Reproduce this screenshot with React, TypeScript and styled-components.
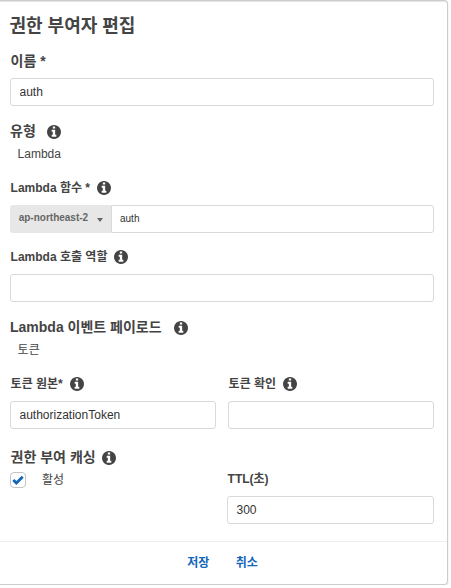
import React, { useState } from 'react';
import styled, { createGlobalStyle } from 'styled-components';

const GlobalStyle = createGlobalStyle`
  * { box-sizing: border-box; }
  body {
    margin: 0;
    background: #fff;
    color: #444;
    font-family: 'Liberation Sans', 'Noto Sans CJK KR', sans-serif;
    font-size: 12px;
    overflow: hidden;
  }
`;

const Card = styled.form`
  width: 448px;
  height: 585px;
  border: 1px solid #ccc;
  border-left: 0;
  border-radius: 0 4px 4px 0;
  box-shadow: 0 1px 2px rgba(0, 0, 0, 0.14), inset 0 1px 0 #e6e6e6;
  display: flex;
  flex-direction: column;
`;

const Body = styled.div`
  height: 540px;
  padding: 12px 13px 0 10px;
`;

const Title = styled.h1`
  margin: 0 0 12px -0.5px;
  font-size: 18px;
  line-height: 26px;
  height: 26px;
  font-weight: 700;
`;

const Section = styled.section<{ $gap: number }>`
  margin-bottom: ${(p) => p.$gap}px;
`;

const InfoSvg = styled.svg`
  flex: none;
  display: block;
`;

const Label = styled.label<{ $gap?: number; $indent?: number }>`
  display: flex;
  align-items: center;
  gap: ${(p) => p.$gap ?? 7}px;
  height: 20px;
  padding-left: ${(p) => p.$indent ?? 0.6}px;
  line-height: 20px;
  font-weight: 700;
  white-space: nowrap;
`;

const Heading = styled(Label)`
  font-size: 14px;

  ${InfoSvg} {
    margin-top: 2px;
  }
`;

const Value = styled.div`
  height: 19px;
  margin-top: 3px;
  padding-top: 1px;
  padding-left: 7.6px;
  line-height: 19px;
`;

const Input = styled.input`
  display: block;
  width: 100%;
  height: 28px;
  margin-top: 7px;
  padding: 0 8.5px;
  border: 1px solid #d9d9d9;
  border-radius: 3px;
  background: #fff;
  color: #333;
  font: inherit;
  outline: none;
`;

const Group = styled.div`
  display: flex;
  margin-top: 7px;
`;

const Region = styled.button`
  display: flex;
  justify-content: space-between;
  width: 101px;
  height: 28px;
  padding: 0 8px 3px 8.7px;
  align-items: center;
  border: 0;
  border-radius: 3px 0 0 3px;
  background: #e7e7e7;
  color: #666;
  font: inherit;
  font-size: 10px;
  font-weight: 700;
`;

const Caret = styled.span`
  margin-top: 4px;
  border: solid transparent;
  border-width: 4px 3.5px 0;
  border-top-color: #666;
`;

const FunctionInput = styled(Input)`
  flex: 1;
  width: auto;
  margin: 0;
  padding: 0 8px 1px;
  border-radius: 0 3px 3px 0;
  font-size: 10px;
`;

const Columns = styled.div`
  display: grid;
  grid-template-columns: 206px 206px;
  column-gap: 12px;
`;

const CacheColumns = styled.div`
  display: grid;
  grid-template-columns: 217px 207px;
  margin-top: 2px;
`;

const CheckRow = styled.div`
  display: flex;
  height: 22px;
  gap: 16px;
  line-height: 22px;
`;

const Checkbox = styled.button`
  display: flex;
  align-items: center;
  justify-content: center;
  width: 16px;
  height: 16px;
  margin-top: 3px;
  padding: 0;
  border: 1px solid #c4c4c4;
  border-radius: 4px;
  background: #fff;
`;

const Footer = styled.footer`
  display: flex;
  justify-content: center;
  gap: 26.5px;
  height: 43px;
  padding: 11px 2px 0 0;
  border-top: 1px solid #eee;
`;

const Action = styled.button`
  height: 20px;
  padding: 0;
  border: 0;
  background: none;
  color: #1166bb;
  font: inherit;
  font-weight: 700;
  line-height: 20px;
`;

const Info = () => (
  <InfoSvg width="14" height="14" viewBox="0 0 1536 1536" fill="#444" aria-hidden="true">
    <path d="M1024 1248v-160q0-14-9-23t-23-9h-96V544q0-14-9-23t-23-9H544q-14 0-23 9t-9 23v160q0 14 9 23t23 9h96v320h-96q-14 0-23 9t-9 23v160q0 14 9 23t23 9h448q14 0 23-9t9-23zM896 352V192q0-14-9-23t-23-9H672q-14 0-23 9t-9 23v160q0 14 9 23t23 9h192q14 0 23-9t9-23zm640 416q0 209-103 385.500T1153.500 1433 768 1536t-385.500-103T103 1153.500 0 768t103-385.500T382.500 103 768 0t385.500 103T1433 382.500 1536 768z" />
  </InfoSvg>
);

const Check = () => (
  <svg width="12" height="10" viewBox="0 0 12 10" fill="none" stroke="#1166bb" strokeWidth="2.8" aria-hidden="true">
    <path d="M1.300 4.900 4.400 8 10.700 1.700" />
  </svg>
);

export default function App() {
  const [active, setActive] = useState(true);
  return (
    <>
      <GlobalStyle />
      <Card onSubmit={(e) => e.preventDefault()}>
        <Body>
          <Title>권한 부여자 편집</Title>
          <Section $gap={15}>
            <Heading>이름 *</Heading>
            <Input defaultValue="auth" />
          </Section>
          <Section $gap={15}>
            <Heading $gap={11.5} $indent={0}>유형 <Info /></Heading>
            <Value>Lambda</Value>
          </Section>
          <Section $gap={14}>
            <Label>Lambda 함수 * <Info /></Label>
            <Group>
              <Region type="button">ap-northeast-2 <Caret /></Region>
              <FunctionInput defaultValue="auth" />
            </Group>
          </Section>
          <Section $gap={15}>
            <Label $gap={6.5}>Lambda 호출 역할 <Info /></Label>
            <Input />
          </Section>
          <Section $gap={15}>
            <Heading $gap={12} $indent={-0}>Lambda 이벤트 페이로드 <Info /></Heading>
            <Value>토큰</Value>
          </Section>
          <Section $gap={18}>
            <Columns>
              <div>
                <Label>토큰 원본* <Info /></Label>
                <Input defaultValue="authorizationToken" />
              </div>
              <div>
                <Label $gap={6.5}>토큰 확인 <Info /></Label>
                <Input />
              </div>
            </Columns>
          </Section>
          <Heading $gap={6.5}>권한 부여 캐싱 <Info /></Heading>
          <CacheColumns>
            <CheckRow>
              <Checkbox type="button" role="checkbox" aria-checked={active} onClick={() => setActive(!active)}>
                {active && <Check />}
              </Checkbox>
              활성
            </CheckRow>
            <div>
              <Label>TTL(초)</Label>
              <Input defaultValue="300" />
            </div>
          </CacheColumns>
        </Body>
        <Footer>
          <Action type="submit">저장</Action>
          <Action type="button">취소</Action>
        </Footer>
      </Card>
    </>
  );
}
